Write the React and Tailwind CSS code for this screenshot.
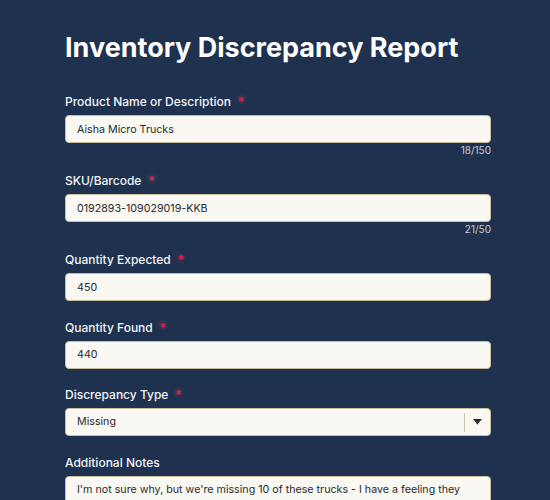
import React from 'react';

const Label = ({ children, required }) => (
  <label className="flex items-center text-[12px] leading-[18px] font-medium text-[#f3f4f6]">
    {children}
    {required && (
      <span className="ml-[7px] text-[12px] text-[#e11d48] [text-shadow:0_0_4px_rgba(244,63,94,0.9)]">
        *
      </span>
    )}
  </label>
);

const inputCls =
  'block w-full h-[28px] mt-[4px] px-[11px] rounded-[4px] border border-[#c9bf9f] bg-[#f9f8f3] text-[10.7px] text-[#2b2b2b] outline-none';

const Field = ({ label, value, counter, required = true }) => (
  <div className="mb-[17.5px]">
    <Label required={required}>{label}</Label>
    <input className={inputCls} defaultValue={value} readOnly />
    {counter && (
      <div className="mt-[1.5px] h-[10px] text-right text-[10px] leading-[10px] text-[#c9ccd3]">
        {counter}
      </div>
    )}
  </div>
);

export default function App() {
  return (
    <div className="min-h-[500px] bg-[#1e3250] pl-[65px] pr-[59px] pt-[30px] font-['Inter',sans-serif] overflow-hidden">
      <h1 className="text-[27px] leading-[36px] font-bold text-white">
        Inventory Discrepancy Report
      </h1>
      <div className="mt-[27px]">
        <Field label="Product Name or Description" value="Aisha Micro Trucks" counter="18/150" />
        <Field label="SKU/Barcode" value="0192893-109029019-KKB" counter="21/50" />
        <Field label="Quantity Expected" value="450" />
        <Field label="Quantity Found" value="440" />

        <div className="mb-[17.5px]">
          <Label required>Discrepancy Type</Label>
          <div className="mt-[4px] flex h-[28px] items-center rounded-[4px] border border-[#c9bf9f] bg-[#f9f8f3]">
            <span className="flex-1 px-[11px] text-[10.7px] text-[#2b2b2b]">Missing</span>
            <span className="h-[19px] w-[1px] bg-[#cfc6a8]" />
            <span className="flex w-[25px] justify-center">
              <svg width="9" height="6" viewBox="0 0 9 6">
                <path d="M0 0h9L4.5 5.5z" fill="#2b2b2b" />
              </svg>
            </span>
          </div>
        </div>

        <div>
          <Label>Additional Notes</Label>
          <textarea
            className="mt-[4px] block h-[80px] w-full resize-none rounded-[4px] border border-[#c9bf9f] bg-[#f9f8f3] px-[11px] pt-[5px] text-[10.7px] leading-[16px] text-[#2b2b2b] outline-none"
            defaultValue="I'm not sure why, but we're missing 10 of these trucks - I have a feeling they were not delivered."
            readOnly
          />
        </div>
      </div>
    </div>
  );
}
